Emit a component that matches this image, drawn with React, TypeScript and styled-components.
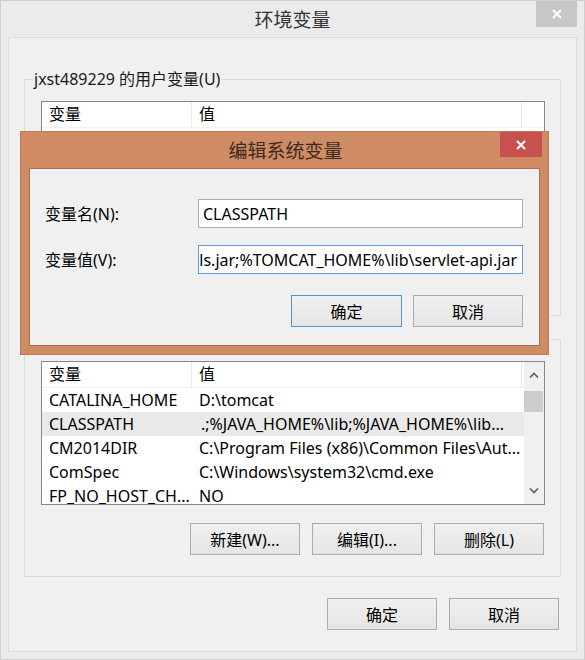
import * as React from "react";
import styled, { createGlobalStyle } from "styled-components";

const GlobalStyle = createGlobalStyle`
  html, body {
    margin: 0;
    padding: 0;
    background: #ebebeb;
  }
  * {
    box-sizing: border-box;
  }
  body {
    font-family: "Noto Sans", "Noto Sans CJK SC", sans-serif;
    font-size: 16px;
    color: #000;
  }
`;

const Window = styled.div`
  position: relative;
  width: 585px;
  height: 660px;
  display: flex;
  flex-direction: column;
  padding: 0 7px 7px;
  background: #ebebeb;
  border: 1px solid #cfcfcf;
  overflow: hidden;
`;

const TitleBar = styled.div<{ $side: number }>`
  display: grid;
  grid-template-columns: ${(p) => p.$side}px 1fr ${(p) => p.$side}px;
  height: 36px;
  flex-shrink: 0;
`;

const Title = styled.div<{ $color: string }>`
  grid-column: 2;
  text-align: center;
  line-height: 35px;
  font-size: 19px;
  color: ${(p) => p.$color};
  font-family: "Noto Sans CJK SC", sans-serif;
`;

const CloseButton = styled.div<{ $bg: string; $w: number; $h: number }>`
  grid-column: 3;
  justify-self: end;
  align-self: start;
  width: ${(p) => p.$w}px;
  height: ${(p) => p.$h}px;
  background: ${(p) => p.$bg};
  display: flex;
  align-items: center;
  justify-content: center;
`;

const Panel = styled.div`
  flex: 1;
  display: flex;
  flex-direction: column;
  padding: 31px 15px 0 15px;
  background: #f0f0f0;
  border: 1px solid #dcdcdc;
`;

const Group = styled.fieldset<{ $gap: number; $bottom: number }>`
  margin: ${(p) => p.$gap}px 0 0;
  padding: 12px 15px ${(p) => p.$bottom}px 16px;
  border: 1px solid #dcdcdc;
  min-width: 0;
`;

const Legend = styled.legend`
  margin-left: -8px;
  padding: 0 1px;
  font-size: 16px;
  line-height: 20px;
  color: #1a1a1a;
`;

const ListBox = styled.div`
  width: 504px;
  height: 144px;
  display: flex;
  background: #fff;
  border: 1px solid #828790;
  overflow: hidden;
`;

const ListBody = styled.div`
  flex: 1;
  min-width: 0;
  display: flex;
  flex-direction: column;
`;

const HeaderRow = styled.div`
  display: flex;
  height: 26px;
  flex-shrink: 0;
  border-bottom: 1px solid #f2f2f2;
`;

const HeaderCell = styled.div<{ $w: number }>`
  width: ${(p) => p.$w}px;
  flex-shrink: 0;
  padding-left: 7px;
  line-height: 25px;
  border-right: 1px solid #e8e8e8;
`;

const Row = styled.div<{ $selected?: boolean }>`
  display: flex;
  height: 24px;
  flex-shrink: 0;
  background: ${(p) => (p.$selected ? "#e9e9e9" : "transparent")};
`;

const Cell = styled.div<{ $w: number; $indent?: number }>`
  width: ${(p) => p.$w}px;
  flex-shrink: 0;
  padding-left: ${(p) => p.$indent ?? 7}px;
  line-height: 24px;
  white-space: nowrap;
  overflow: hidden;
`;

const Scrollbar = styled.div`
  width: 20px;
  flex-shrink: 0;
  display: flex;
  flex-direction: column;
  background: #f0f0f0;
`;

const ScrollArrow = styled.div`
  height: 26px;
  flex-shrink: 0;
  display: flex;
  align-items: center;
  justify-content: center;
`;

const ScrollTrack = styled.div`
  flex: 1;
`;

const Thumb = styled.div<{ $offset: number }>`
  height: 21px;
  margin: ${(p) => p.$offset}px 1px 0 0;
  background: #cdcdcd;
`;

const ButtonRow = styled.div<{ $top: number; $gap: number; $right: number }>`
  display: flex;
  justify-content: flex-end;
  gap: ${(p) => p.$gap}px;
  margin-top: ${(p) => p.$top}px;
  padding-right: ${(p) => p.$right}px;
`;

const Button = styled.button<{ $primary?: boolean; $w?: number }>`
  width: ${(p) => p.$w ?? 110}px;
  height: 32px;
  padding: 0;
  font-family: inherit;
  font-size: 16px;
  color: #000;
  background: linear-gradient(#f0f0f0, #e5e5e5);
  border: 1px solid ${(p) => (p.$primary ? "#4f93d8" : "#acacac")};
  border-radius: 0;
`;

const Dialog = styled.div`
  position: absolute;
  left: 19px;
  top: 130px;
  width: 529px;
  height: 224px;
  display: flex;
  flex-direction: column;
  padding: 0 8px 8px;
  background: #cf8b63;
  border: 1px solid #bf7c55;
`;

const DialogTitleBar = styled(TitleBar)`
  margin-right: -2px;
`;

const DialogBody = styled.div`
  flex: 1;
  display: flex;
  flex-direction: column;
  padding: 30px 16px 0 15px;
  background: #f0f0f0;
  border: 1px solid #a96f4d;
`;

const FormGrid = styled.div`
  display: grid;
  grid-template-columns: 153px 1fr;
  row-gap: 17px;
  align-items: center;
`;

const FieldLabel = styled.div`
  line-height: 20px;
`;

const TextBox = styled.div<{ $focused?: boolean }>`
  height: 29px;
  display: flex;
  align-items: center;
  justify-content: ${(p) => (p.$focused ? "flex-end" : "flex-start")};
  padding: 0 5px 0 4px;
  background: #fff;
  border: 1px solid ${(p) => (p.$focused ? "#569de5" : "#abadb3")};
  white-space: nowrap;
  overflow: hidden;
`;

const TextValue = styled.span`
  flex-shrink: 0;
`;

const CloseGlyph = () => (
  <svg width="10" height="10" viewBox="0 0 10 10">
    <path d="M1 1 L9 9 M9 1 L1 9" stroke="#fff" strokeWidth="2" fill="none" />
  </svg>
);

const Chevron = ({ up }: { up?: boolean }) => (
  <svg width="10" height="6" viewBox="0 0 10 6">
    <polyline
      points={up ? "1,5.5 5,1.5 9,5.5" : "1,0.5 5,4.5 9,0.5"}
      stroke="#616161"
      strokeWidth="1.6"
      fill="none"
    />
  </svg>
);

interface VarRow {
  name: string;
  value: string;
}

const userVars: VarRow[] = [
  { name: "TEMP", value: "%USERPROFILE%\\AppData\\Local\\Temp" },
  { name: "TMP", value: "%USERPROFILE%\\AppData\\Local\\Temp" },
];

const systemVars: VarRow[] = [
  { name: "CATALINA_HOME", value: "D:\\tomcat" },
  { name: "CLASSPATH", value: ".;%JAVA_HOME%\\lib;%JAVA_HOME%\\lib..." },
  { name: "CM2014DIR", value: "C:\\Program Files (x86)\\Common Files\\Aut..." },
  { name: "ComSpec", value: "C:\\Windows\\system32\\cmd.exe" },
  { name: "FP_NO_HOST_CH...", value: "NO" },
];

interface ListProps {
  rows: VarRow[];
  selected?: number;
  scroll?: number;
}

const VarList = ({ rows, selected, scroll }: ListProps) => (
  <ListBox>
    <ListBody>
      <HeaderRow>
        <HeaderCell $w={150}>变量</HeaderCell>
        <HeaderCell $w={330}>值</HeaderCell>
      </HeaderRow>
      {rows.map((r, i) => (
        <Row key={r.name} $selected={i === selected}>
          <Cell $w={150}>{r.name}</Cell>
          <Cell $w={330} $indent={i === selected ? 9 : 7}>
            {r.value}
          </Cell>
        </Row>
      ))}
    </ListBody>
    {scroll !== undefined && (
      <Scrollbar>
        <ScrollArrow>
          <Chevron up />
        </ScrollArrow>
        <ScrollTrack>
          <Thumb $offset={scroll} />
        </ScrollTrack>
        <ScrollArrow>
          <Chevron />
        </ScrollArrow>
      </Scrollbar>
    )}
  </ListBox>
);

export default function App(): JSX.Element {
  return (
    <>
      <GlobalStyle />
      <Window>
        <TitleBar $side={41}>
          <Title $color="#333">环境变量</Title>
          <CloseButton $bg="#c7c7c7" $w={41} $h={26}>
            <CloseGlyph />
          </CloseButton>
        </TitleBar>

        <Panel>
          <Group $gap={0} $bottom={20}>
            <Legend>jxst489229 的用户变量(U)</Legend>
            <VarList rows={userVars} />
            <ButtonRow $top={18} $gap={12} $right={1}>
              <Button>新建(N)...</Button>
              <Button>编辑(E)...</Button>
              <Button>删除(D)</Button>
            </ButtonRow>
          </Group>

          <Group $gap={13} $bottom={21}>
            <Legend>系统变量(S)</Legend>
            <VarList rows={systemVars} selected={1} scroll={3} />
            <ButtonRow $top={18} $gap={12} $right={1}>
              <Button>新建(W)...</Button>
              <Button>编辑(I)...</Button>
              <Button>删除(L)</Button>
            </ButtonRow>
          </Group>

          <ButtonRow $top={21} $gap={12} $right={2}>
            <Button>确定</Button>
            <Button>取消</Button>
          </ButtonRow>
        </Panel>

        <Dialog>
          <DialogTitleBar $side={44}>
            <Title $color="#3b2a20">编辑系统变量</Title>
            <CloseButton $bg="#c8504e" $w={42} $h={25}>
              <CloseGlyph />
            </CloseButton>
          </DialogTitleBar>
          <DialogBody>
            <FormGrid>
              <FieldLabel>变量名(N):</FieldLabel>
              <TextBox>
                <TextValue>CLASSPATH</TextValue>
              </TextBox>
              <FieldLabel>变量值(V):</FieldLabel>
              <TextBox $focused>
                <TextValue>
                  .;%JAVA_HOME%\lib;%JAVA_HOME%\lib\tools.jar;%TOMCAT_HOME%\lib\servlet-api.jar
                </TextValue>
              </TextBox>
            </FormGrid>
            <ButtonRow $top={21} $gap={11} $right={0}>
              <Button $primary $w={111}>
                确定
              </Button>
              <Button>取消</Button>
            </ButtonRow>
          </DialogBody>
        </Dialog>
      </Window>
    </>
  );
}
